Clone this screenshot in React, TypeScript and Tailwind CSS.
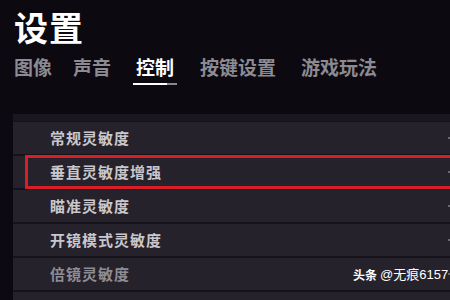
import React from "react";

const rows = [
  { label: "常规灵敏度", dim: false, active: false },
  { label: "垂直灵敏度增强", dim: false, active: true },
  { label: "瞄准灵敏度", dim: false, active: false },
  { label: "开镜模式灵敏度", dim: false, active: false },
  { label: "倍镜灵敏度", dim: true, active: false },
  { label: "", dim: true, active: false },
];

const tabs = [
  { t: "图像", cls: "" },
  { t: "声音", cls: "" },
  { t: "控制", cls: "ml-[1px]" },
  { t: "按键设置", cls: "ml-[2px]" },
  { t: "游戏玩法", cls: "ml-[4px]" },
];

export default function App() {
  return (
    <div
      className="w-[450px] h-[300px] overflow-hidden bg-[#0c0911] relative flex flex-col"
      style={{ fontFamily: '"Noto Sans CJK SC", "Noto Sans", sans-serif' }}
    >
      <div className="pl-[14px] pt-[7px] text-[34px] leading-[40px] font-bold text-white tracking-[1px]">
        设置
      </div>
      <div className="flex pl-[14px] mt-[9px] gap-[21px]">
        {tabs.map(({ t, cls }) => (
          <div key={t} className={`flex flex-col items-center ${cls}`}>
            <span
              className={`text-[19px] leading-[22px] font-bold ${
                t === "控制" ? "text-white" : "text-[#8c8a92]"
              }`}
            >
              {t}
            </span>
            {t === "控制" ? (
              <div className="mt-[5px] flex items-center w-[44px]">
                <div className="h-[2px] w-[34px] bg-white" />
                <div className="h-[2px] w-[10px] bg-[#8a8890]" />
              </div>
            ) : (
              <div className="mt-[5px] h-[2px]" />
            )}
          </div>
        ))}
      </div>
      <div className="mt-[29px] ml-[13px] flex flex-col">
        <div className="h-[7px] bg-[#1a1720]" />
        <div className="flex flex-col gap-[2px] bg-[#15121a] pt-[1px]">
          {rows.map((r, i) => (
            <div
              key={i}
              className="relative h-[32px] bg-[#25222b] flex items-center pl-[37px]"
            >
              <span
                className={`text-[15px] font-bold tracking-[1px] ${
                  r.dim ? "text-[#8e8c94]" : "text-[#c9c7cd]"
                }`}
              >
                {r.label}
              </span>
              <div className="absolute right-0 top-[15px] w-[2px] h-[2px] bg-[#6a6870]" />
              {r.active && (
                <div className="absolute left-[12px] -right-[6px] -top-[1px] -bottom-[1px] border-[3px] border-[#d91e29]" />
              )}
            </div>
          ))}
        </div>
      </div>
      <div className="absolute left-[353px] top-[266px] flex items-center gap-[3px] text-white text-[12px] leading-[18px] whitespace-nowrap">
        <span className="font-bold">头条</span>
        <span style={{ fontFamily: '"Liberation Sans", "Noto Sans CJK SC", sans-serif' }} className="text-[13px]">@无痕6157</span>
      </div>
    </div>
  );
}
